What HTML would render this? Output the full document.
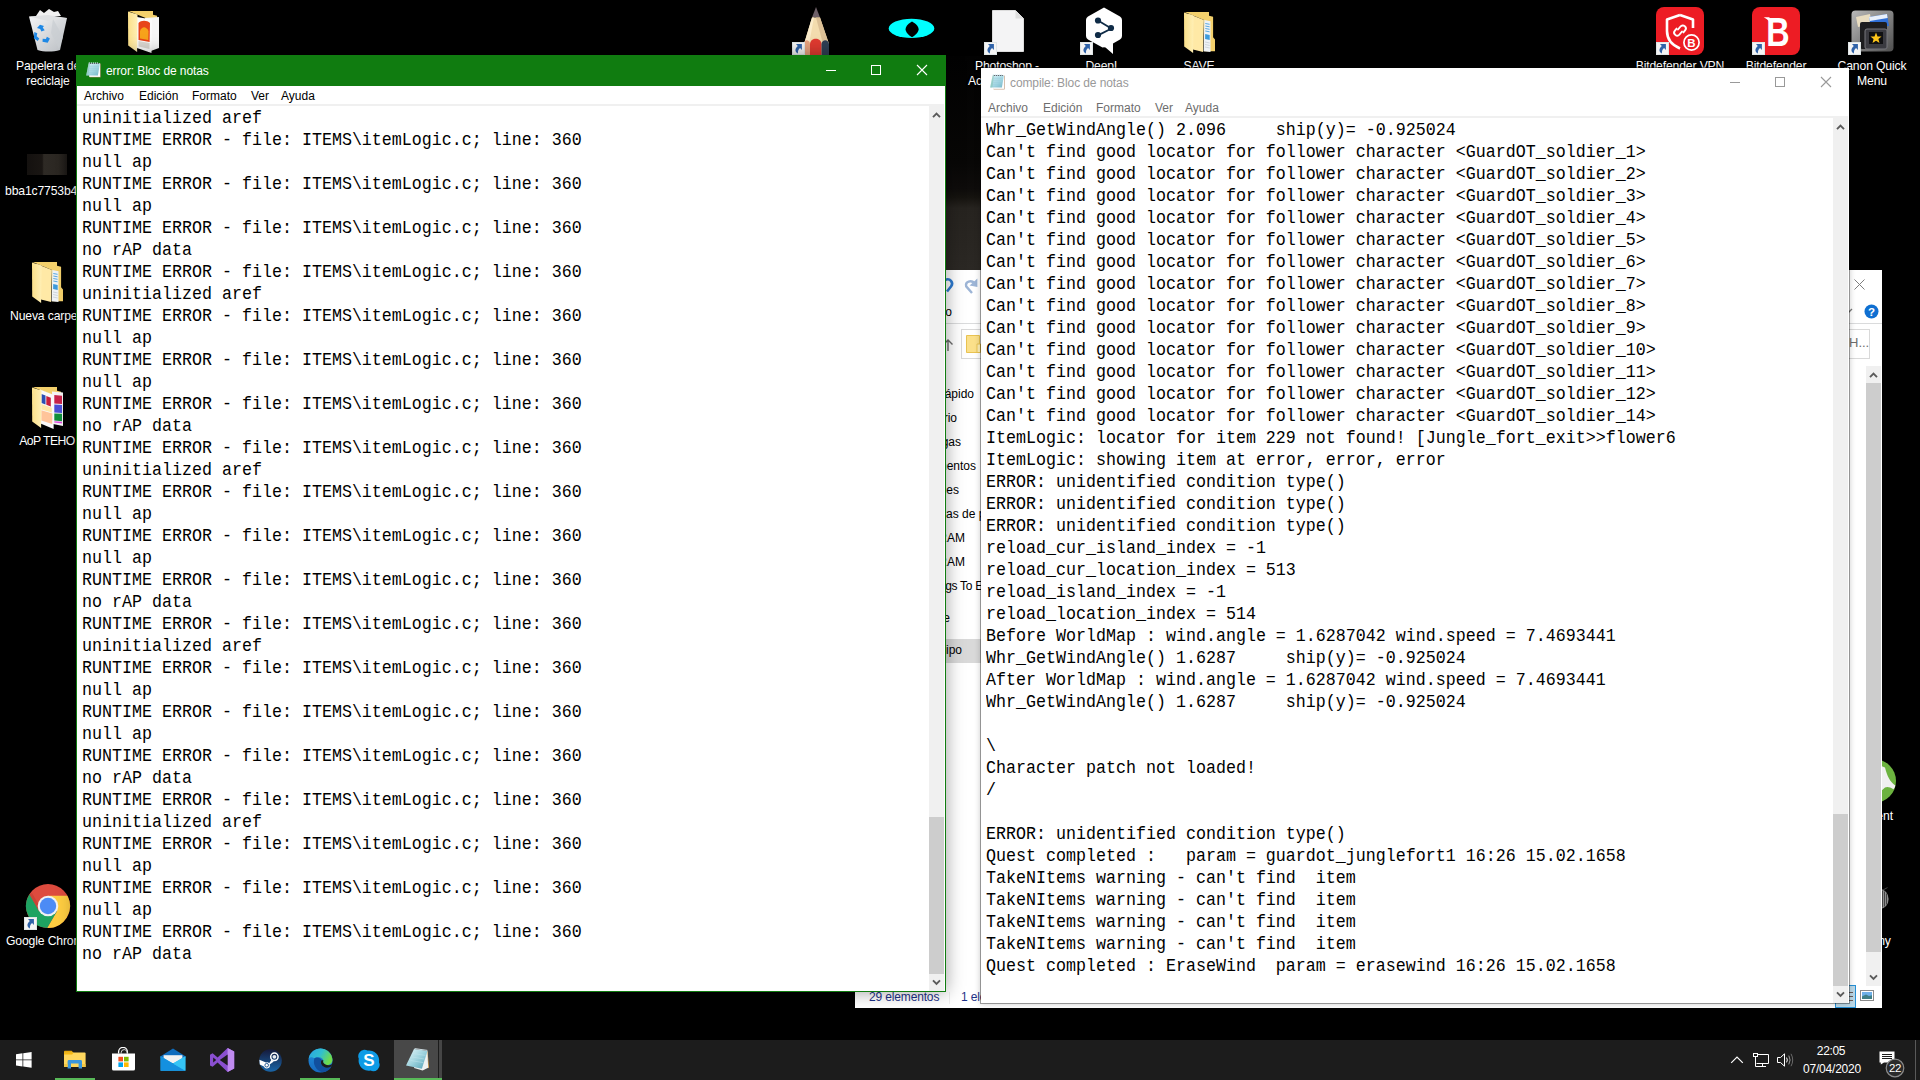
<!DOCTYPE html>
<html lang="es"><head><meta charset="utf-8"><title>Escritorio</title>
<style>
*{box-sizing:border-box;margin:0;padding:0}
html,body{width:1920px;height:1080px;overflow:hidden;background:#000;font-family:"Liberation Sans",sans-serif;}
.abs{position:absolute}
#desk{position:absolute;left:0;top:0;width:1920px;height:1080px;overflow:hidden;background:#000}
.dlabel{position:absolute;color:#fff;font-size:12.2px;line-height:15px;text-align:center;white-space:nowrap;text-shadow:0 1px 2px #000,0 0 2px #000;letter-spacing:-0.15px}
.win{position:absolute;background:#fff}
.tbar{position:absolute;left:0;top:0;right:0;height:30px}
.ttext{position:absolute;left:29px;top:8px;font-size:12px;line-height:15px;white-space:nowrap;letter-spacing:-0.1px}
.menu{position:absolute;left:0;right:0;top:30px;height:18px;background:#fff;font-size:12px;line-height:21px;white-space:nowrap}
.menu span{position:absolute;top:0}
.msep{position:absolute;left:0;right:1px;top:48px;height:2px;background:#f0f0f0}
.txt{position:absolute;left:5px;top:52px;font-family:"Liberation Mono",monospace;font-size:16.667px;line-height:22px;color:#000}
.txt .l{height:22px;white-space:pre;transform-origin:0 15px;transform:scaleY(1.08)}
.sb{position:absolute;width:15px;background:#f0f0f0}
.sb .th{position:absolute;left:0;width:100%;background:#cdcdcd}
.sb svg{position:absolute;left:-1px}
#task{position:absolute;left:0;top:1040px;width:1920px;height:40px;background:#1c1c1c}
</style></head><body>
<div id="desk">
<svg width="0" height="0" style="position:absolute">
<defs>
<linearGradient id="npg" x1="0" y1="0" x2="1" y2="1"><stop offset="0" stop-color="#d9f3f8"/><stop offset="0.6" stop-color="#a3d6e2"/><stop offset="1" stop-color="#6fb3c6"/></linearGradient>
<symbol id="notepad" viewBox="0 0 16 16">
<path d="M3.6 1.6H14.6V15.4H3.6Z" fill="#b48a6a"/>
<path d="M3.2 1.4H14.1V14.9H3.2Z" fill="#fdfdfd"/>
<path d="M2.6 1.5H13.9L11.9 13.6H0.2Z" fill="url(#npg)"/>
<path d="M2.6 1.5L0.2 13.6H2.4L4 1.5Z" fill="#7dbfa9" opacity=".55"/>
<path d="M3.4 4.2H12.8M3 6.2H12.5M2.7 8.2H12.2M2.4 10.2H11.9M2.1 12.2H11.6" stroke="#8cc4d4" stroke-width=".5" fill="none"/>
<path d="M3.3 0.2V1.9M5.3 0.2V1.9M7.3 0.2V1.9M9.3 0.2V1.9M11.3 0.2V1.9" stroke="#cfeaf2" stroke-width="0.9"/>
<path d="M4.3 1V2M6.3 1V2M8.3 1V2M10.3 1V2M12.2 1V2" stroke="#2f3440" stroke-width="0.9"/>
</symbol>
<symbol id="chevup" viewBox="0 0 17 17"><path d="M5 11.2L8.5 7.7L12 11.2" stroke="#5a5a5a" stroke-width="1.9" fill="none"/></symbol>
<symbol id="chevdn" viewBox="0 0 17 17"><path d="M5 6.3L8.5 9.8L12 6.3" stroke="#5a5a5a" stroke-width="1.9" fill="none"/></symbol>
</defs></svg>


<!-- wallpaper strip visible between the windows -->
<div class="abs" style="left:946px;top:56px;width:35px;height:214px;background:linear-gradient(#020202 0%,#080706 50%,#0e0c0b 62%,#15130f 66%,#26231f 71%,#2b2824 100%)"></div>

<!--ICONS-BEGIN-->
<!-- ===== desktop icons ===== -->
<svg width="0" height="0" style="position:absolute"><defs>
<symbol id="sc" viewBox="0 0 13 13"><rect x="0" y="0" width="13" height="13" fill="#f4f4f4"/><rect x="0.5" y="0.5" width="12" height="12" fill="none" stroke="#dfe5e6"/><path d="M4 2H9.9V7.9L8.1 6.1C6.4 7.3 5.8 9 5.9 11.6C3.4 10 2 7.4 5.8 3.9Z" fill="#2f62a8"/></symbol>
<linearGradient id="fg1" x1="0" y1="0" x2="1" y2="0"><stop offset="0" stop-color="#fbe08a"/><stop offset="1" stop-color="#ffefb5"/></linearGradient>
<symbol id="folder" viewBox="0 0 32 42">
<path d="M0.6 0H25V3.7L29.1 4.8V25.2L31 27.4V39.3H20V8Z" fill="#f3d06c"/>
<path d="M20.4 8.1L26.5 9.3V40L19.6 39.3Z" fill="#eef2f6"/>
<path d="M21.3 11.5L25.6 12.3M21.3 14L25.6 14.8M21.3 16.5L25.6 17.3M21.3 19L25.6 19.8" stroke="#58a8e0" stroke-width="1"/>
<path d="M21.2 22L25.7 23V28L21.1 27Z" fill="#3e9bdc"/>
<path d="M21.1 30L25.7 31M21 32.5L25.7 33.5M21 35L25.7 36" stroke="#cfd6dd" stroke-width="1"/>
<path d="M5 1.9L19.9 8.1L19.1 40L9 37.4Z" fill="#ffe9a6"/>
<path d="M0 0.4L9.5 3.4L9.1 41.1L0.2 34.4Z" fill="url(#fg1)"/>
</symbol>
</defs></svg>

<!-- recycle bin -->
<svg class="abs" style="left:27px;top:7px" width="42" height="47" viewBox="0 0 42 47">
<defs><linearGradient id="rb" x1="0" y1="0" x2="1" y2="1"><stop offset="0" stop-color="#f4f5f6"/><stop offset="1" stop-color="#b9bdc2"/></linearGradient></defs>
<path d="M9 9L13 3L17 6L22 2L27 5L31 4L34 9Z" fill="#f1f1f1"/>
<path d="M2 9.5L40 11L33 43C26 45 17 45 10.5 43Z" fill="url(#rb)"/>
<path d="M2 9.5L21 8L40 11L21 14Z" fill="#dfe1e3"/>
<path d="M26 12L36 30L32 42L24 26Z" fill="#c9cdd1" opacity=".7"/>
<g transform="translate(-3.5,0.5)"><path d="M13.5 20.5l3-3.2 4 1.2-1.3 1.6 2 2.6-3.3 1.2-1.2-2.4zM10.8 24.6l3 1.2-0.6 3 2.6 2.2-1.6 2.4-3.8-2.6zM19 34.2l0.2-3 3.2 0.3 1-2.3 3 1.8-2.2 4.2z" fill="#1e88e5"/></g>
</svg>
<div class="dlabel" style="left:8px;top:59px;width:80px">Papelera de<br>reciclaje</div>

<!-- folder with picture -->
<svg class="abs" style="left:128px;top:11px" width="32" height="42" viewBox="0 0 32 42">
<path d="M0.6 0H25V3.7L29.1 4.8V36H20V8Z" fill="#f3d06c"/>
<path d="M17 7L31 6V37L20 41Z" fill="#f6f6f6"/>
<path d="M9 6L24 8.5L23.5 42L9 37Z" fill="#fbfbfb"/>
<path d="M10.5 12C13 9 19 9 22 12L21.6 31L10.5 29Z" fill="#e8441a"/>
<path d="M12 20C14 15 18 15 20.5 20L20.3 29L12 27.5Z" fill="#f7a21b"/>
<path d="M10.5 30L21.6 32L21.5 38L10.5 35.5Z" fill="#d9d5cf"/>
<path d="M0 0.4L9.5 3.4L9.1 41.1L0.2 34.4Z" fill="url(#fg1)"/>
</svg>

<!-- bba1c thumbnail -->
<div class="abs" style="left:27px;top:154px;width:40px;height:21px;background:linear-gradient(90deg,#14110f 0%,#1a1613 38%,#2e2a25 42%,#2b2722 78%,#1b1815 100%)"></div>
<div class="dlabel" style="left:5px;top:184px;text-align:left">bba1c7753b48d</div>

<!-- Nueva carpeta -->
<svg class="abs" style="left:32px;top:262px" width="32" height="42"><use href="#folder"/></svg>
<div class="dlabel" style="left:10px;top:309px;text-align:left">Nueva carpeta</div>

<!-- AoP TEHO -->
<svg class="abs" style="left:32px;top:387px" width="32" height="42" viewBox="0 0 32 42">
<path d="M0.6 0H25V3.7L29.1 4.8V36H20V8Z" fill="#f3d06c"/>
<path d="M20 4.5L31 5.5V39L21 37Z" fill="#f4f4f4"/>
<path d="M22.3 8L30 8.8V17L22.3 16.4Z" fill="#c8234a"/>
<path d="M22.3 17.4L30 18V26L22.3 25.6Z" fill="#4b4fd6"/>
<path d="M22.3 26.4L30 26.8V34.2L22.3 33.6Z" fill="#11903c"/>
<path d="M22.3 34.2L30 34.8V36.4L22.3 35.6Z" fill="#e24ae0"/>
<path d="M8 2.5L22 8L21.6 42L8.5 36.5Z" fill="#fafafa"/>
<path d="M9.5 7L13.5 8.6V17.5L9.5 16Z" fill="#2b4fb4"/><path d="M14.3 9L18.8 10.8V19.5L14.3 17.8Z" fill="#c81e3c"/>
<path d="M9.3 17L19.8 20.8V25.4L9.3 22.4Z" fill="#ffe7a8"/>
<path d="M9.3 23.2L20.4 26.4L20.2 37L9.3 33.6Z" fill="#ffc49a"/>
<path d="M0 0.4L9.5 3.4L9.1 41.1L0.2 34.4Z" fill="url(#fg1)"/>
</svg>
<div class="dlabel" style="left:7px;top:434px;width:80px;letter-spacing:-0.55px">AoP TEHO</div>

<!-- Google Chrome -->
<svg class="abs" style="left:25px;top:883px" width="46" height="46" viewBox="0 0 46 46">
<circle cx="23" cy="23" r="22" fill="#dd4b3e"/>
<path d="M23 12.7L42.44 12.7A22 22 0 0 1 22.2 44.99L31.92 28.15Z" fill="#fecd41"/>
<path d="M31.92 28.15L22.2 44.99A22 22 0 0 1 4.36 11.31L14.08 28.15Z" fill="#1ea362"/>
<path d="M4.36 11.31L14.08 28.15L16.5 26.5L7 10Z" fill="#b93a2f" opacity=".45"/>
<circle cx="23" cy="23" r="10.3" fill="#f1f1f1"/><circle cx="23" cy="23" r="8.2" fill="#4c8bf5"/>
</svg>
<svg class="abs" style="left:24px;top:917px" width="13" height="13"><use href="#sc"/></svg>
<div class="dlabel" style="left:6px;top:934px;text-align:left">Google Chrome</div>

<!-- pencil -->
<svg class="abs" style="left:803px;top:6px" width="27" height="50" viewBox="0 0 27 50">
<path d="M13 1L17 11.5H9Z" fill="#6e6068"/>
<path d="M9 11.5H17L26 38V50H1V38Z" fill="#f3dcae"/>
<path d="M13 11.5H17L26 38H20Z" fill="#dcc096"/>
<path d="M9 11.5H11L6 38H1Z" fill="#fbeccb"/>
<path d="M1 50V38C1 33 6.5 33 7 38V50Z" fill="#e6a27e"/>
<path d="M7 50V38C7.5 31 18 31 18.5 38V50Z" fill="#e03a30"/>
<path d="M18.5 50V38C19 33 25.5 33 26 38V50Z" fill="#2f3f54"/>
</svg>
<svg class="abs" style="left:792px;top:42px" width="13" height="13"><use href="#sc"/></svg>

<!-- cyan eye -->
<svg class="abs" style="left:888px;top:18px" width="48" height="22" viewBox="0 0 48 22"><ellipse cx="23.5" cy="10.4" rx="22.8" ry="9.7" fill="#00ffff"/><path d="M24 3.4C27 5 30.6 8 30.6 11.2C30.6 14.4 27 17.6 24 19.2C21 17.6 17.6 14.4 17.6 11.2C17.6 8 21 5 24 3.4Z" fill="#000"/></svg>

<!-- Photoshop shortcut -->
<svg class="abs" style="left:992px;top:10px" width="32" height="42" viewBox="0 0 32 42"><path d="M0.5 0.5H23.5L31.5 8.5V41.5H0.5Z" fill="#f4f4f5" stroke="#dcdcdc"/><path d="M23.5 0.5V8.5H31.5Z" fill="#dedede"/></svg>
<svg class="abs" style="left:984px;top:42px" width="13" height="13"><use href="#sc"/></svg>
<div class="dlabel" style="left:967px;top:59px;width:80px">Photoshop -<br>Acceso directo</div>

<!-- DeepL -->
<svg class="abs" style="left:1085px;top:7px" width="38" height="48" viewBox="0 0 38 48">
<path d="M19 0.5L35 9.5Q37 10.6 37 13V29Q37 31.4 35 32.5L28 36.5V47L20.5 40.5Q19 39.8 17.5 40.5L3 32.5Q1 31.4 1 29V13Q1 10.6 3 9.5Z" fill="#fff"/>
<g stroke="#0f2b46" stroke-width="1.8" fill="none"><path d="M13 13.5L25.5 21M25.5 22L13 28.4"/></g>
<circle cx="13" cy="13.5" r="3.1" fill="#0f2b46"/><circle cx="26" cy="21" r="3.1" fill="#0f2b46"/><circle cx="13" cy="28" r="3.1" fill="#0f2b46"/>
</svg>
<svg class="abs" style="left:1080px;top:42px" width="13" height="13"><use href="#sc"/></svg>
<div class="dlabel" style="left:1063px;top:59px;width:80px">DeepL</div>

<!-- SAVE -->
<svg class="abs" style="left:1184px;top:12px" width="32" height="42"><use href="#folder"/></svg>
<div class="dlabel" style="left:1159px;top:59px;width:80px">SAVE</div>

<!-- Bitdefender VPN -->
<svg class="abs" style="left:1656px;top:7px" width="48" height="48" viewBox="0 0 48 48">
<rect width="48" height="48" rx="8" fill="#ed1c24"/>
<path d="M24 8L37 12.5V21M24 8L11 12.5V24C11 33 17 38.5 24 41.5" fill="none" stroke="#fff" stroke-width="2.6" stroke-linejoin="round"/>
<g fill="none" stroke="#fff" stroke-width="1.9" stroke-linecap="round"><path d="M22 22.5L24.5 19.5a3 3 0 0 1 4.6 3.9L27.4 25.4"/><path d="M26 24.5L23.5 27.5a3 3 0 0 1-4.6-3.9L20.6 21.6"/></g>
<circle cx="35.5" cy="35.5" r="7.6" fill="#ed1c24" stroke="#fff" stroke-width="1.7"/>
<text x="35.5" y="39.6" font-family="Liberation Sans,sans-serif" font-weight="bold" font-size="11.5" fill="#fff" text-anchor="middle">B</text>
</svg>
<svg class="abs" style="left:1656px;top:42px" width="13" height="13"><use href="#sc"/></svg>
<div class="dlabel" style="left:1630px;top:59px;width:100px">Bitdefender VPN</div>

<!-- Bitdefender -->
<svg class="abs" style="left:1752px;top:7px" width="48" height="48" viewBox="0 0 48 48">
<rect width="48" height="48" rx="8" fill="#ed1c24"/>
<text transform="translate(14.2,39.4) scale(0.8,1)" font-family="Liberation Sans,sans-serif" font-weight="bold" font-size="40.5" fill="#fff">B</text>
<path d="M11.7 10.3H17.5V15.2C16 12.8 14 11.6 11.7 10.3Z" fill="#fff"/>
</svg>
<svg class="abs" style="left:1752px;top:42px" width="13" height="13"><use href="#sc"/></svg>
<div class="dlabel" style="left:1726px;top:59px;width:100px">Bitdefender</div>

<!-- Canon Quick Menu -->
<svg class="abs" style="left:1851px;top:10px" width="43" height="42" viewBox="0 0 43 42">
<defs><linearGradient id="cq" x1="0" y1="0" x2="1" y2="1"><stop offset="0" stop-color="#b9b9b9"/><stop offset="1" stop-color="#4e4e4e"/></linearGradient></defs>
<rect x="0.5" y="0.5" width="42" height="41" rx="4" fill="url(#cq)"/>
<path d="M5 7L19 4L21 14L7 17Z" fill="#e8dcc0"/>
<path d="M18 7L36 4L38 16L20 18Z" fill="#2f6fd6"/><path d="M18 7L36 4L36.6 8L18.7 11Z" fill="#e9f0fb"/>
<rect x="9" y="12" width="27" height="27" rx="2" fill="#1d1d1f"/>
<rect x="14" y="19" width="22" height="20" rx="2" fill="#3a3a40" stroke="#77777d" stroke-width="1"/>
<rect x="18" y="22" width="14" height="12" fill="#101012"/>
<path d="M25 22.6L26.5 26.4L30.6 26.6L27.4 29.1L28.5 33L25 30.8L21.5 33L22.6 29.1L19.4 26.6L23.5 26.4Z" fill="#ffc61a"/>
</svg>
<svg class="abs" style="left:1848px;top:42px" width="13" height="13"><use href="#sc"/></svg>
<div class="dlabel" style="left:1822px;top:59px;width:100px">Canon Quick<br>Menu</div>

<!-- uTorrent (mostly hidden) -->
<svg class="abs" style="left:1852px;top:759px" width="45" height="45" viewBox="0 0 45 45"><circle cx="22" cy="22" r="22" fill="#6cb33f"/><path d="M28 6.4L33 8.6C35 17 38 23 43.3 26.4C43 28 42.4 29.2 41.4 30.2C38 28 35 27.6 33 28.6L28 33Z" fill="#f0f0f0"/></svg>
<div class="dlabel" style="left:1821px;top:809px;width:100px">µTorrent</div>
<!-- grey icon (mostly hidden) -->
<svg class="abs" style="left:1870px;top:886px" width="22" height="24" viewBox="0 0 22 24"><ellipse cx="10" cy="13" rx="8.6" ry="10" fill="#8e8e8e"/><path d="M12.5 4.5V21.5M14.5 5.5V20.5M16.5 7.5V18.5" stroke="#3a3a3a" stroke-width=".9"/><path d="M13 4L17.5 1.6" stroke="#444" stroke-width="1"/></svg>
<div class="dlabel" style="left:1821px;top:934px;width:100px">Destiny</div>

<!--ICONS-END-->

<!-- ===== explorer window (behind both notepads) ===== -->
<div class="abs" id="exp" style="left:855px;top:270px;width:1027px;height:738px;background:#fff;overflow:hidden;font-size:12px;color:#000;white-space:nowrap">
  <!-- quick access toolbar bits -->
  <svg class="abs" style="left:86px;top:6px" width="38" height="20" viewBox="0 0 38 20"><path d="M4 4C9 1.5 13 6.5 10 10.5L6 15.5" fill="none" stroke="#2e7bd1" stroke-width="2.6"/><path d="M31 17L25.2 10.4C24 5.6 30 3.6 33.6 7.2" fill="none" stroke="#9db5d6" stroke-width="2.4"/><path d="M36.4 2.4V11L28.6 9.4Z" fill="#9db5d6"/></svg>
  <div class="abs" style="right:930px;top:35px">Inicio</div>
  <svg class="abs" style="left:992px;top:35px" width="10" height="10" viewBox="0 0 10 10"><path d="M0 9L5 4" stroke="#7a7a7a" stroke-width="1.3" fill="none"/></svg>
  <svg class="abs" style="left:999px;top:9px" width="11" height="11" viewBox="0 0 11 11"><path d="M0.5 0.5L10.5 10.5M10.5 0.5L0.5 10.5" stroke="#7d7d7d" stroke-width="1" fill="none"/></svg>
  <svg class="abs" style="left:1009px;top:34px" width="15" height="15" viewBox="0 0 15 15"><circle cx="7.5" cy="7.5" r="7" fill="#0f6fd1"/><text x="7.5" y="11.6" font-family="Liberation Sans,sans-serif" font-weight="bold" font-size="11.5" fill="#fff" text-anchor="middle">?</text></svg>
  <div class="abs" style="left:0;top:53px;width:1027px;height:1px;background:#dadbdc"></div>
  <!-- address row -->
  <svg class="abs" style="left:87px;top:68px" width="12" height="14" viewBox="0 0 12 14"><path d="M6 13V2M1.5 6.5L6 2L10.5 6.5" fill="none" stroke="#6b6b6b" stroke-width="1.4"/></svg>
  <div class="abs" style="left:106px;top:59px;width:760px;height:30px;border:1px solid #d9d9d9"></div>
  <svg class="abs" style="left:111px;top:65px" width="16" height="18" viewBox="0 0 16 18"><path d="M0.5 0.5H13.5V17.5H0.5Z" fill="#fbe08a" stroke="#e9c352"/><path d="M11 9H14.5V17.5H11Z" fill="#fff1b8" stroke="#e9c352"/></svg>
  <div class="abs" style="left:880px;top:59px;width:135px;height:30px;border:1px solid #d9d9d9"></div>
  <div class="abs" style="left:994px;top:65px;color:#6d6d6d;font-size:13px">H...</div>
  <!-- nav pane -->
  <div class="abs" style="left:0;top:369px;width:126px;height:24px;background:#d9d9d9"></div>
  <div class="abs" style="right:908px;top:117px">Acceso rápido</div>
  <div class="abs" style="right:925px;top:141px">Escritorio</div>
  <div class="abs" style="right:921px;top:165px">Descargas</div>
  <div class="abs" style="right:906px;top:189px">Documentos</div>
  <div class="abs" style="right:923px;top:213px">Imágenes</div>
  <div class="abs" style="left:55px;top:237px">Capturas de pantalla</div>
  <div class="abs" style="right:917px;top:261px">PROGRAM</div>
  <div class="abs" style="right:917px;top:285px">PROGRAM</div>
  <div class="abs" style="left:68px;top:309px;letter-spacing:-0.3px">Things To Explore</div>
  <div class="abs" style="right:932px;top:341px">OneDrive</div>
  <div class="abs" style="right:920px;top:373px">Este equipo</div>
  <!-- content scrollbar -->
  <div class="sb" style="left:1011px;top:96px;height:620px"><svg width="17" height="17" style="top:0"><use href="#chevup"/></svg><div class="th" style="top:17px;height:569px"></div><svg width="17" height="17" style="top:603px"><use href="#chevdn"/></svg></div>
  <!-- status bar -->
  <div class="abs" style="left:14px;top:720px;color:#1e3287;letter-spacing:-0.15px">29 elementos</div>
  <div class="abs" style="left:94px;top:722px;width:1px;height:12px;background:#efefef"></div>
  <div class="abs" style="left:106px;top:720px;color:#1e3287;letter-spacing:-0.15px">1 elemento seleccionado</div>
  <div class="abs" style="left:980px;top:715px;width:21px;height:23px;border:1px solid #2690d6;background:#bcd9e8"></div>
  <svg class="abs" style="left:994px;top:720px" width="10" height="14" viewBox="0 0 10 14"><path d="M0 2.5H4M0 6.5H4M0 10.5H4" stroke="#6b5b57" stroke-width="1"/></svg>
  <svg class="abs" style="left:1005px;top:720px" width="15" height="12" viewBox="0 0 15 12"><rect x="0.5" y="0.5" width="13" height="10" fill="#fff" stroke="#8a8a8a"/><rect x="2" y="2" width="10" height="7" fill="#6fb0e8"/><path d="M2 6.5L6 4.5L9 6L12 5.2V9H2Z" fill="#3f7f86"/></svg>
</div>


<!-- window 1: error -->
<div class="win" id="w1" style="left:76px;top:55px;width:870px;height:937px;border:1px solid #107c10;box-shadow:0 0 17px rgba(0,0,0,.38)">
  <div class="tbar" style="background:#107c10">
    <svg class="abs" style="left:9px;top:6px" width="16" height="16"><use href="#notepad"/></svg>
    <div class="ttext" style="color:#fff">error: Bloc de notas</div>
    <svg class="abs" style="left:732px;top:0" width="136" height="30"><g stroke="#fff" stroke-width="1" fill="none"><path d="M17 14.5H27"/><rect x="62.5" y="9.5" width="9" height="9"/><path d="M108 9L118 19M118 9L108 19" stroke-width="1.1"/></g></svg>
  </div>
  <div class="menu" style="color:#000"><span style="left:7px">Archivo</span><span style="left:62px">Edición</span><span style="left:115px">Formato</span><span style="left:174px">Ver</span><span style="left:204px">Ayuda</span></div>
  <div class="msep"></div>
  <div class="txt">
<div class="l">uninitialized aref</div>
<div class="l">RUNTIME ERROR - file: ITEMS\itemLogic.c; line: 360</div>
<div class="l">null ap</div>
<div class="l">RUNTIME ERROR - file: ITEMS\itemLogic.c; line: 360</div>
<div class="l">null ap</div>
<div class="l">RUNTIME ERROR - file: ITEMS\itemLogic.c; line: 360</div>
<div class="l">no rAP data</div>
<div class="l">RUNTIME ERROR - file: ITEMS\itemLogic.c; line: 360</div>
<div class="l">uninitialized aref</div>
<div class="l">RUNTIME ERROR - file: ITEMS\itemLogic.c; line: 360</div>
<div class="l">null ap</div>
<div class="l">RUNTIME ERROR - file: ITEMS\itemLogic.c; line: 360</div>
<div class="l">null ap</div>
<div class="l">RUNTIME ERROR - file: ITEMS\itemLogic.c; line: 360</div>
<div class="l">no rAP data</div>
<div class="l">RUNTIME ERROR - file: ITEMS\itemLogic.c; line: 360</div>
<div class="l">uninitialized aref</div>
<div class="l">RUNTIME ERROR - file: ITEMS\itemLogic.c; line: 360</div>
<div class="l">null ap</div>
<div class="l">RUNTIME ERROR - file: ITEMS\itemLogic.c; line: 360</div>
<div class="l">null ap</div>
<div class="l">RUNTIME ERROR - file: ITEMS\itemLogic.c; line: 360</div>
<div class="l">no rAP data</div>
<div class="l">RUNTIME ERROR - file: ITEMS\itemLogic.c; line: 360</div>
<div class="l">uninitialized aref</div>
<div class="l">RUNTIME ERROR - file: ITEMS\itemLogic.c; line: 360</div>
<div class="l">null ap</div>
<div class="l">RUNTIME ERROR - file: ITEMS\itemLogic.c; line: 360</div>
<div class="l">null ap</div>
<div class="l">RUNTIME ERROR - file: ITEMS\itemLogic.c; line: 360</div>
<div class="l">no rAP data</div>
<div class="l">RUNTIME ERROR - file: ITEMS\itemLogic.c; line: 360</div>
<div class="l">uninitialized aref</div>
<div class="l">RUNTIME ERROR - file: ITEMS\itemLogic.c; line: 360</div>
<div class="l">null ap</div>
<div class="l">RUNTIME ERROR - file: ITEMS\itemLogic.c; line: 360</div>
<div class="l">null ap</div>
<div class="l">RUNTIME ERROR - file: ITEMS\itemLogic.c; line: 360</div>
<div class="l">no rAP data</div>
</div>
  <div class="sb" style="left:852px;top:50px;height:885px"><svg width="17" height="17" style="top:0"><use href="#chevup"/></svg><div class="th" style="top:711px;height:157px"></div><svg width="17" height="17" style="top:868px"><use href="#chevdn"/></svg></div>
</div>

<!-- window 2: compile -->
<div class="win" id="w2" style="left:980px;top:67px;width:870px;height:937px;border:1px solid rgba(0,0,0,.35);background-clip:padding-box;box-shadow:0 0 6px rgba(0,0,0,.2)">
  <div class="tbar" style="background:#fff">
    <svg class="abs" style="left:9px;top:6px" width="16" height="16"><use href="#notepad"/></svg>
    <div class="ttext" style="color:#999">compile: Bloc de notas</div>
    <svg class="abs" style="left:732px;top:0" width="136" height="30"><g stroke="#999" stroke-width="1" fill="none"><path d="M17 14.5H27"/><rect x="62.5" y="9.5" width="9" height="9"/><path d="M108 9L118 19M118 9L108 19" stroke-width="1.1"/></g></svg>
  </div>
  <div class="menu" style="color:#6d6d6d"><span style="left:7px">Archivo</span><span style="left:62px">Edición</span><span style="left:115px">Formato</span><span style="left:174px">Ver</span><span style="left:204px">Ayuda</span></div>
  <div class="msep"></div>
  <div class="txt">
<div class="l">Whr_GetWindAngle() 2.096     ship(y)= -0.925024</div>
<div class="l">Can't find good locator for follower character &lt;GuardOT_soldier_1&gt;</div>
<div class="l">Can't find good locator for follower character &lt;GuardOT_soldier_2&gt;</div>
<div class="l">Can't find good locator for follower character &lt;GuardOT_soldier_3&gt;</div>
<div class="l">Can't find good locator for follower character &lt;GuardOT_soldier_4&gt;</div>
<div class="l">Can't find good locator for follower character &lt;GuardOT_soldier_5&gt;</div>
<div class="l">Can't find good locator for follower character &lt;GuardOT_soldier_6&gt;</div>
<div class="l">Can't find good locator for follower character &lt;GuardOT_soldier_7&gt;</div>
<div class="l">Can't find good locator for follower character &lt;GuardOT_soldier_8&gt;</div>
<div class="l">Can't find good locator for follower character &lt;GuardOT_soldier_9&gt;</div>
<div class="l">Can't find good locator for follower character &lt;GuardOT_soldier_10&gt;</div>
<div class="l">Can't find good locator for follower character &lt;GuardOT_soldier_11&gt;</div>
<div class="l">Can't find good locator for follower character &lt;GuardOT_soldier_12&gt;</div>
<div class="l">Can't find good locator for follower character &lt;GuardOT_soldier_14&gt;</div>
<div class="l">ItemLogic: locator for item 229 not found! [Jungle_fort_exit&gt;&gt;flower6</div>
<div class="l">ItemLogic: showing item at error, error, error</div>
<div class="l">ERROR: unidentified condition type()</div>
<div class="l">ERROR: unidentified condition type()</div>
<div class="l">ERROR: unidentified condition type()</div>
<div class="l">reload_cur_island_index = -1</div>
<div class="l">reload_cur_location_index = 513</div>
<div class="l">reload_island_index = -1</div>
<div class="l">reload_location_index = 514</div>
<div class="l">Before WorldMap : wind.angle = 1.6287042 wind.speed = 7.4693441</div>
<div class="l">Whr_GetWindAngle() 1.6287     ship(y)= -0.925024</div>
<div class="l">After WorldMap : wind.angle = 1.6287042 wind.speed = 7.4693441</div>
<div class="l">Whr_GetWindAngle() 1.6287     ship(y)= -0.925024</div>
<div class="l"></div>
<div class="l">\</div>
<div class="l">Character patch not loaded!</div>
<div class="l">/</div>
<div class="l"></div>
<div class="l">ERROR: unidentified condition type()</div>
<div class="l">Quest completed :   param = guardot_junglefort1 16:26 15.02.1658</div>
<div class="l">TakeNItems warning - can't find  item</div>
<div class="l">TakeNItems warning - can't find  item</div>
<div class="l">TakeNItems warning - can't find  item</div>
<div class="l">TakeNItems warning - can't find  item</div>
<div class="l">Quest completed : EraseWind  param = erasewind 16:26 15.02.1658</div>
</div>
  <div class="sb" style="left:852px;top:50px;height:885px"><svg width="17" height="17" style="top:0"><use href="#chevup"/></svg><div class="th" style="top:696px;height:172px"></div><svg width="17" height="17" style="top:868px"><use href="#chevdn"/></svg></div>
</div>

<!-- taskbar -->
<div id="task">
<!-- ===== taskbar contents ===== -->
<!-- start -->
<svg class="abs" style="left:16px;top:12px" width="16" height="16" viewBox="0 0 17 17"><path d="M0 2.4L6.9 1.4V8H0ZM7.7 1.3L16.6 0V8H7.7ZM0 8.8H6.9V15.4L0 14.4ZM7.7 8.8H16.6V16.8L7.7 15.5Z" fill="#fff"/></svg>
<!-- running indicators -->
<div class="abs" style="left:55px;top:38px;width:40px;height:2px;background:#58b958"></div>
<div class="abs" style="left:300px;top:38px;width:40px;height:2px;background:#58b958"></div>
<div class="abs" style="left:394px;top:0;width:44px;height:40px;background:#484848"></div>
<div class="abs" style="left:439px;top:0;width:3px;height:40px;background:#454545"></div>
<div class="abs" style="left:394px;top:38px;width:48px;height:2px;background:#58b958"></div>
<!-- file explorer -->
<svg class="abs" style="left:63px;top:10px" width="24" height="20" viewBox="0 0 24 20"><path d="M1 1.5Q1 0.8 1.8 0.8H8.6L10.4 2.8H1Z" fill="#e8a90c"/><path d="M1 2.6H21.6Q22.6 2.6 22.6 3.6V17H1Z" fill="#ffd75e"/><path d="M1 2.6H10.5L9.2 4.4H1Z" fill="#f6b70f"/><path d="M4.6 18.4V11.4Q4.6 10 6 10H17.6Q19 10 19 11.4V18.4H15.6V13.4H8V18.4Z" fill="#3a96dd"/><path d="M1 14H4.6V17H1ZM19 14H22.6V17H19Z" fill="#f1c644"/></svg>
<!-- store -->
<svg class="abs" style="left:111px;top:7px" width="25" height="25" viewBox="0 0 25 25"><path d="M7.6 6.5V4.8a4.4 4.4 0 0 1 8.8 0V6.5" fill="none" stroke="#fff" stroke-width="1.3"/><path d="M10.2 6.5V5.6a3 3 0 0 1 6 0V6.5" fill="none" stroke="#d9d9d9" stroke-width="1"/><path d="M1 6.5H24V22Q24 23.6 22.4 23.6H2.6Q1 23.6 1 22Z" fill="#fff"/><rect x="7.4" y="9.8" width="4.6" height="4.6" fill="#f25022"/><rect x="13" y="9.8" width="4.6" height="4.6" fill="#7fba00"/><rect x="7.4" y="15.4" width="4.6" height="4.6" fill="#00a4ef"/><rect x="13" y="15.4" width="4.6" height="4.6" fill="#ffb900"/></svg>
<!-- mail -->
<svg class="abs" style="left:160px;top:8px" width="26" height="24" viewBox="0 0 26 24"><path d="M0.6 8.2L13 0.6L25.4 8.2V10H0.6Z" fill="#0f6cbd"/><path d="M3.6 7.2H22.4V15H3.6Z" fill="#f2f2f2"/><path d="M0.6 8.2L13 15.6L25.4 8.2V22.8H0.6Z" fill="#29b6f2"/><path d="M0.6 8.2L13 15.6L25.4 22.8H0.6Z" fill="#1490df"/><path d="M13 15.6L25.4 8.2V22.8Z" fill="#35c4f5"/></svg>
<!-- visual studio -->
<svg class="abs" style="left:210px;top:8px" width="25" height="24" viewBox="0 0 25 24"><path d="M17.6 0.1L24.2 3.6V20.5L17.6 24L7.6 14.6L2.6 18.8L0 17.4V6.7L2.6 5.3L7.6 9.5Z" fill="#8a4fd0"/><path d="M17.6 0.1L24.2 3.6V20.5L17.6 24Z" fill="#c08bf0"/><path d="M17.6 6.6V17.4L9.8 12Z" fill="#1c1c1c"/><path d="M3.2 9.6V14.6L6.2 12.1Z" fill="#1c1c1c"/></svg>
<!-- steam -->
<svg class="abs" style="left:259px;top:9px" width="23" height="23" viewBox="0 0 23 23"><defs><linearGradient id="stg" x1="0" y1="0" x2="0" y2="1"><stop offset="0" stop-color="#15193a"/><stop offset="1" stop-color="#1a66a8"/></linearGradient></defs><circle cx="11.5" cy="11.5" r="11.3" fill="url(#stg)"/><circle cx="15.4" cy="7.8" r="3.7" fill="none" stroke="#fff" stroke-width="1.5"/><circle cx="15.4" cy="7.8" r="1.9" fill="#e6ebf2"/><path d="M0.4 10.8L7 13.5A2.9 2.9 0 0 1 10.2 14.2L12.4 10.8L14.8 12.4L10.7 15.4A2.9 2.9 0 0 1 4.9 17.4L0.8 15.6Z" fill="#fff"/><circle cx="7.7" cy="16.2" r="1.8" fill="none" stroke="#1a4f8a" stroke-width=".9"/></svg>
<!-- edge -->
<svg class="abs" style="left:308px;top:8px" width="25" height="25" viewBox="0 0 25 25"><defs><linearGradient id="edg" x1="0" y1="0" x2="1" y2=".4"><stop offset="0" stop-color="#2aa4e4"/><stop offset=".55" stop-color="#31bfcf"/><stop offset="1" stop-color="#6fdc4c"/></linearGradient><linearGradient id="edb" x1="0" y1="0" x2="0" y2="1"><stop offset="0" stop-color="#2191dc"/><stop offset="1" stop-color="#1668c0"/></linearGradient></defs><circle cx="12.5" cy="12.5" r="12" fill="url(#edb)"/><path d="M0.6 11A12 12 0 0 1 24.4 11C24.8 15 22 17.4 18.4 17C15.4 16.6 14.4 14.4 15.4 12.6C14.6 9 9.6 8 6.4 10.2C4 8.6 1.6 9 0.6 11Z" fill="url(#edg)"/><path d="M6.4 10.2C4.4 16 8 22.6 14.6 24.3C19 24 22.2 21.4 23.6 18C20.4 20.6 15.4 20 13.4 16.6C12.4 14.8 12.8 13 13.8 12C12.4 9.6 8.6 8.6 6.4 10.2Z" fill="#114f9e"/><path d="M13.8 12C12.8 13 12.6 15 13.6 16.8C15.4 19.8 19.6 20.6 23 18.4C23.6 17.6 24 16.8 24.2 16C22.6 17.4 19.6 17.6 17.4 16.6C15.2 15.6 14.6 13.6 15.4 12.6Z" fill="#1c1c1c"/></svg>
<!-- skype -->
<svg class="abs" style="left:357px;top:9px" width="24" height="23" viewBox="0 0 24 23"><path d="M7 0.8A6.4 6.4 0 0 1 10.6 1.6A10 10 0 0 1 22 13.2A6.4 6.4 0 0 1 13.4 21.6A10 10 0 0 1 1.8 9.8A6.4 6.4 0 0 1 7 0.8Z" fill="#0e9be6"/><text x="12" y="17.4" font-family="Liberation Sans,sans-serif" font-weight="bold" font-size="17" fill="#fff" text-anchor="middle">S</text></svg>
<!-- notepad (active) -->
<svg class="abs" style="left:405px;top:8px" width="25" height="24" viewBox="0 0 25 24"><defs><linearGradient id="npt" x1="0" y1="0" x2="1" y2="1"><stop offset="0" stop-color="#e9f8fb"/><stop offset=".5" stop-color="#9fd3de"/><stop offset="1" stop-color="#4f9fb5"/></linearGradient></defs><path d="M22.6 3.2L24 19.6L23 20.2L21.8 3.6Z" fill="#d9a24e"/><path d="M13 2L22.4 3.2L23.2 19.8L17.6 22.4L9 20Z" fill="#eef1f1"/><path d="M9 1.1L22.5 3L16.9 20.8L1 17.4Z" fill="url(#npt)"/><path d="M9.6 0.6L22.4 2.4" stroke="#cfdde2" stroke-width="1"/><path d="M8 5.5L20.5 7.4M6.8 9L19.4 11M5.6 12.5L18.3 14.6" stroke="#c4e6ee" stroke-width=".6" opacity=".8"/></svg>
<!-- tray -->
<svg class="abs" style="left:1730px;top:15px" width="14" height="9" viewBox="0 0 14 9"><path d="M1.2 7.8L7 2L12.8 7.8" fill="none" stroke="#fff" stroke-width="1.2"/></svg>
<svg class="abs" style="left:1752px;top:12px" width="18" height="16" viewBox="0 0 18 16"><path d="M4.5 2.5H16.5V11.5H4.5M10.5 11.5V14.5M7 14.5H14" fill="none" stroke="#fff" stroke-width="1"/><rect x="1.5" y="1.5" width="4" height="3" fill="#1c1c1c" stroke="#fff" stroke-width="1"/><path d="M3.5 4.5V14.5H7" fill="none" stroke="#fff" stroke-width="1"/></svg>
<svg class="abs" style="left:1776px;top:12px" width="18" height="16" viewBox="0 0 18 16"><path d="M1.5 5.5H4.5L8.5 1.8V14.2L4.5 10.5H1.5Z" fill="none" stroke="#fff" stroke-width="1"/><path d="M10.6 5.6Q12 8 10.6 10.4" fill="none" stroke="#fff" stroke-width="1"/><path d="M12.8 3.6Q15.4 8 12.8 12.4" fill="none" stroke="#9a9a9a" stroke-width="1"/><path d="M15 1.8Q18.4 8 15 14.2" fill="none" stroke="#6a6a6a" stroke-width="1"/></svg>
<div class="abs" style="left:1791px;top:4px;width:80px;text-align:center;color:#fff;font-size:12px;line-height:14px;letter-spacing:-0.35px;white-space:nowrap">22:05</div>
<div class="abs" style="left:1792px;top:22px;width:80px;text-align:center;color:#fff;font-size:12px;line-height:14px;letter-spacing:-0.2px;white-space:nowrap">07/04/2020</div>
<svg class="abs" style="left:1879px;top:11px" width="17" height="14" viewBox="0 0 17 14"><path d="M0.5 0.5H15.5V11.5H5L1.8 13.6V11.5H0.5Z" fill="#fff"/><path d="M3 3.5H13M3 5.5H13M3 7.5H13" stroke="#1c1c1c" stroke-width="1"/></svg>
<svg class="abs" style="left:1885px;top:18px" width="20" height="20" viewBox="0 0 20 20"><circle cx="10" cy="10" r="8.8" fill="#2b2b2b" stroke="#8c8c8c" stroke-width="1.2"/><text x="10" y="14" font-family="Liberation Sans,sans-serif" font-size="11.5" fill="#fff" text-anchor="middle" letter-spacing="-0.4">22</text></svg>
<div class="abs" style="left:1915px;top:0;width:1px;height:40px;background:#5a5a5a"></div>

</div>

</div>
</body></html>
